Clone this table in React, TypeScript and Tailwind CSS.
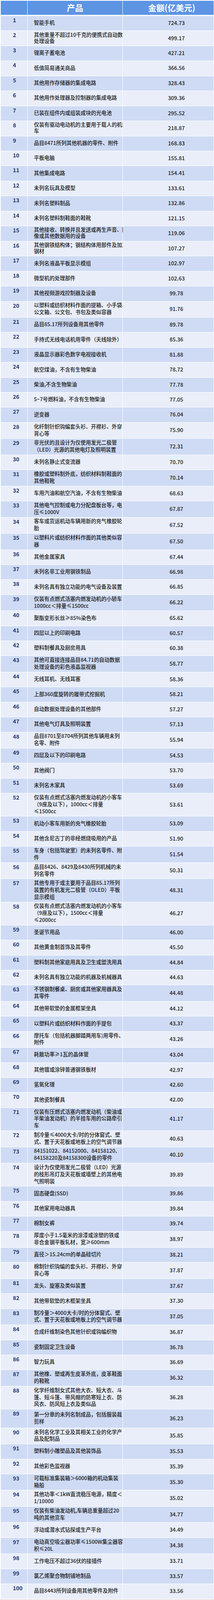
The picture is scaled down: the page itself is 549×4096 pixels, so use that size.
type Row = {
  no: number;
  lines: string[];
  amount: string;
  size?: 'tight' | 'tall';
};

const rows: Row[] = [
  { no: 1, lines: ['智能手机'], amount: '724.73' },
  { no: 2, lines: ['其他重量不超过10千克的便携式自动数据', '处理设备'], amount: '499.17', size: 'tight' },
  { no: 3, lines: ['锂离子蓄电池'], amount: '427.21' },
  { no: 4, lines: ['低值简易通关商品'], amount: '366.56' },
  { no: 5, lines: ['其他用作存储器的集成电路'], amount: '328.43' },
  { no: 6, lines: ['其他用作处理器及控制器的集成电路'], amount: '309.36' },
  { no: 7, lines: ['已装在组件内或组装成块的光电池'], amount: '295.52' },
  { no: 8, lines: ['仅装有驱动电动机的主要用于载人的机动', '车'], amount: '218.87', size: 'tight' },
  { no: 9, lines: ['品目8471所列其他机器的零件、附件'], amount: '168.83' },
  { no: 10, lines: ['平板电脑'], amount: '155.81' },
  { no: 11, lines: ['其他集成电路'], amount: '154.41' },
  { no: 12, lines: ['未列名玩具及模型'], amount: '133.61' },
  { no: 13, lines: ['未列名塑料制品'], amount: '132.86' },
  { no: 14, lines: ['未列名塑料制鞋面的鞋靴'], amount: '121.15' },
  { no: 15, lines: ['其他接收、转换并且发送或再生声音、图', '像或其他数据用的设备'], amount: '119.06', size: 'tight' },
  { no: 16, lines: ['其他钢铁结构体；钢结构体用部件及加工', '钢材'], amount: '107.27', size: 'tight' },
  { no: 17, lines: ['未列名液晶平板显示模组'], amount: '102.97' },
  { no: 18, lines: ['微型机的处理部件'], amount: '102.63' },
  { no: 19, lines: ['其他视频游戏控制器及设备'], amount: '99.78' },
  { no: 20, lines: ['以塑料或纺织材料作面的提箱、小手袋、', '公文箱、公文包、书包及类似容器'], amount: '91.76' },
  { no: 21, lines: ['品目85.17所列设备用其他零件'], amount: '89.78' },
  { no: 22, lines: ['手持式无线电话机用零件（天线除外）'], amount: '85.36' },
  { no: 23, lines: ['液晶显示器彩色数字电视接收机'], amount: '81.88' },
  { no: 24, lines: ['航空煤油，不含有生物柴油'], amount: '78.72' },
  { no: 25, lines: ['柴油,不含生物柴油'], amount: '77.78' },
  { no: 26, lines: ['5~7号燃料油，不含有生物柴油'], amount: '77.05' },
  { no: 27, lines: ['逆变器'], amount: '76.04' },
  { no: 28, lines: ['化纤制针织钩编套头衫、开襟衫、外穿', '背心等'], amount: '75.90' },
  { no: 29, lines: ['非光伏的且设计为仅使用发光二极管', '（LED）光源的其他电灯及照明装置'], amount: '72.31' },
  { no: 30, lines: ['未列名静止式变流器'], amount: '70.70' },
  { no: 31, lines: ['橡胶或塑料制外底，纺织材料制鞋面的', '其他鞋靴'], amount: '70.14' },
  { no: 32, lines: ['车用汽油和航空汽油，不含有生物柴油'], amount: '68.63' },
  { no: 33, lines: ['其他电气控制或电力分配盘板台等，电', '压≤1000V'], amount: '67.87' },
  { no: 34, lines: ['客车或货运机动车辆用新的充气橡胶轮', '胎'], amount: '67.52' },
  { no: 35, lines: ['以塑料片或纺织材料作面的其他类似容', '器'], amount: '67.50' },
  { no: 36, lines: ['其他金属家具'], amount: '67.44' },
  { no: 37, lines: ['未列名非工业用钢铁制品'], amount: '66.98' },
  { no: 38, lines: ['未列名具有独立功能的电气设备及装置'], amount: '66.85' },
  { no: 39, lines: ['仅装有点燃式活塞内燃发动机的小轿车，', '1000cc＜排量≤1500cc'], amount: '66.22' },
  { no: 40, lines: ['聚酯变形长丝≥85%染色布'], amount: '65.62' },
  { no: 41, lines: ['四层以上的印刷电路'], amount: '60.57' },
  { no: 42, lines: ['塑料制餐具及厨房用具'], amount: '60.38' },
  { no: 43, lines: ['其他可直接连接品目84.71的自动数据', '处理设备的彩色液晶监视器'], amount: '58.77' },
  { no: 44, lines: ['无线耳机、无线耳塞'], amount: '58.36' },
  { no: 45, lines: ['上部360度旋转的履带式挖掘机'], amount: '58.21' },
  { no: 46, lines: ['自动数据处理设备的其他部件'], amount: '57.27' },
  { no: 47, lines: ['其他电气灯具及照明装置'], amount: '57.13' },
  { no: 48, lines: ['品目8701至8704所列其他车辆用未列', '名零、附件'], amount: '55.94' },
  { no: 49, lines: ['四层及以下的印刷电路'], amount: '54.53' },
  { no: 50, lines: ['其他阀门'], amount: '53.70' },
  { no: 51, lines: ['未列名木家具'], amount: '53.69' },
  { no: 52, lines: ['仅装有点燃式活塞内燃发动机的小客车', '（9座及以下），1000cc＜排量', '≤1500cc'], amount: '53.61' },
  { no: 53, lines: ['机动小客车用新的充气橡胶轮胎'], amount: '53.09' },
  { no: 54, lines: ['其他含尼古丁的非经燃烧吸用的产品'], amount: '51.90' },
  { no: 55, lines: ['车身（包括驾驶室）的未列名零件、附', '件'], amount: '51.54' },
  { no: 56, lines: ['品目8426、8429及8430所列机械的未', '列名零件'], amount: '50.31' },
  { no: 57, lines: ['其他专用于或主要用于品目85.17所列', '装置的有机发光二极管（OLED）平板', '显示模组'], amount: '48.31' },
  { no: 58, lines: ['仅装有点燃式活塞内燃发动机的小客车', '（9座及以下），1500cc＜排量', '≤2000cc'], amount: '46.27' },
  { no: 59, lines: ['圣诞节用品'], amount: '46.00' },
  { no: 60, lines: ['其他黄金制首饰及其零件'], amount: '45.50' },
  { no: 61, lines: ['塑料制其他家庭用具及卫生或盥洗用具'], amount: '44.84' },
  { no: 62, lines: ['未列名具有独立功能的机器及机械器具'], amount: '44.63' },
  { no: 63, lines: ['不锈钢制餐桌、厨房或其他家用器具及', '其零件'], amount: '44.48' },
  { no: 64, lines: ['其他带软垫的金属框架坐具'], amount: '44.12' },
  { no: 65, lines: ['以塑料片或纺织材料作面的手提包'], amount: '43.37' },
  { no: 66, lines: ['摩托车（包括机器脚踏两用车)用零件、', '附件'], amount: '43.26' },
  { no: 67, lines: ['耗散功率≥1瓦的晶体管'], amount: '43.04' },
  { no: 68, lines: ['其他镀或涂锌普通钢铁板材'], amount: '42.97' },
  { no: 69, lines: ['氢氧化锂'], amount: '42.60' },
  { no: 70, lines: ['其他瓷制餐具'], amount: '42.00' },
  { no: 71, lines: ['仅装有压燃式活塞内燃发动机（柴油或', '半柴油发动机）的半挂车用的公路牵引', '车'], amount: '41.17' },
  { no: 72, lines: ['制冷量≤4000大卡/时的分体窗式、壁', '式、置于天花板或地板上的空气调节器'], amount: '40.63' },
  { no: 73, lines: ['84151022、84152000、84158120、', '84158220及84158300设备的零件'], amount: '40.10' },
  { no: 74, lines: ['设计为仅使用发光二极管（LED）光源', '的枝形吊灯及天花板或墙壁上的其他电', '气照明装'], amount: '39.89' },
  { no: 75, lines: ['固态硬盘(SSD)'], amount: '39.86' },
  { no: 76, lines: ['其他家用电动器具'], amount: '39.84' },
  { no: 77, lines: ['棉制女裤'], amount: '39.74' },
  { no: 78, lines: ['厚度小于1.5毫米的涂漆或涂塑的铁或', '非合金钢平板轧材，宽≥600mm'], amount: '38.97' },
  { no: 79, lines: ['直径＞15.24cm的单晶硅切片'], amount: '38.21' },
  { no: 80, lines: ['棉制针织钩编的套头衫、开襟衫、外穿', '背心等'], amount: '37.87' },
  { no: 81, lines: ['龙头、旋塞及类似装置'], amount: '37.67' },
  { no: 82, lines: ['其他带软垫的木框架坐具'], amount: '37.30' },
  { no: 83, lines: ['制冷量＞4000大卡/时的分体窗式、壁', '式、置于天花板或地板上的空气调节器'], amount: '37.05' },
  { no: 84, lines: ['合成纤维制染色其他针织或钩编织物'], amount: '36.87' },
  { no: 85, lines: ['瓷制固定卫生设备'], amount: '36.78' },
  { no: 86, lines: ['智力玩具'], amount: '36.69' },
  { no: 87, lines: ['其他橡、塑或再生皮革外底，皮革鞋面', '的鞋靴'], amount: '36.32' },
  { no: 88, lines: ['化学纤维制女式其他大衣、短大衣、斗', '篷、短斗篷、带风帽的防寒短上衣、防', '风衣、防风短上衣及类似品'], amount: '36.28' },
  { no: 89, lines: ['第一分章的未列名制成品，包括服装裁', '剪样'], amount: '36.23', size: 'tall' },
  { no: 90, lines: ['未列名化学工业及其相关工业的化学产', '品及配制品'], amount: '35.85' },
  { no: 91, lines: ['塑料制小雕塑品及其他装饰品'], amount: '35.53' },
  { no: 92, lines: ['其他彩色监视器'], amount: '35.39' },
  { no: 93, lines: ['可载标准集装箱＞6000箱的机动集装', '箱船'], amount: '35.30' },
  { no: 94, lines: ['其他功率＜1kW直流稳压电源，精度＜', '1/10000'], amount: '35.02' },
  { no: 95, lines: ['仅装有柴油发动机,车辆总重量超过20', '吨的其他货车'], amount: '34.77' },
  { no: 96, lines: ['浮动或潜水式钻探或生产平台'], amount: '34.49' },
  { no: 97, lines: ['电动真空吸尘器功率≤1500W集尘器容', '积≤20L'], amount: '34.38' },
  { no: 98, lines: ['工作电压不超过36伏的接插件'], amount: '33.71' },
  { no: 99, lines: ['氯乙烯聚合物制铺地制品'], amount: '33.57' },
  { no: 100, lines: ['品目8443所列设备用其他零件及附件'], amount: '33.56' },
];

// row box heights, measured from the reference and scaled
function rowHeight(row: Row) {
  if (row.size === 'tight') return 'h-[37.7px]';
  if (row.size === 'tall') return 'h-[46.5px]';
  if (row.lines.length === 3) return 'h-[58.3px]';
  if (row.lines.length === 2) return 'h-[40.5px]';
  return 'h-[37.4px]';
}

function TableRow({ row }: { row: Row }) {
  const bg = row.no % 2 === 1 ? 'bg-[#cfdbf4]' : 'bg-[#e9eef9]';
  const leading = row.size === 'tight' ? 'leading-[16px]' : 'leading-[17.9px]';

  return (
    <div className={`grid grid-cols-[68px_243px_1fr] gap-x-px ${rowHeight(row)}`}>
      <div className={`${bg} pl-[31px] text-[14px] font-bold leading-[20px] text-[#1f3c74]`}>{row.no}</div>
      <div className={`${bg} flex flex-col justify-center pb-[3px] pl-[16px] text-[13.3px] font-medium text-[#1a1a1a] ${leading}`}>
        {row.lines.map((line) => (
          <span key={line} className="whitespace-nowrap">
            {line}
          </span>
        ))}
      </div>
      <div className={`${bg} flex items-center justify-center pb-[3px] pl-[42px] text-[13.6px] font-medium text-[#1a1a1a]`}>
        {row.amount}
      </div>
    </div>
  );
}

export default function App() {
  return (
    <div className="flex min-h-[4096px] flex-col bg-white font-['Noto_Sans_CJK_SC','Noto_Sans',sans-serif]">
      <div className="pl-[2px] pr-[1px] pt-[1.6px]">
        <div className="grid h-[36.4px] grid-cols-[68px_243px_1fr] gap-x-px">
          <div className="bg-[#5d94e4]" />
          <div className="flex items-center justify-center bg-[#5d94e4] text-[21px] font-bold text-white">产品</div>
          <div className="flex items-center justify-center bg-[#5d94e4] pl-[18px] text-[21px] font-bold text-white">
            金额(亿美元)
          </div>
        </div>
        <div className="mt-[3px] flex flex-col gap-y-px">
          {rows.map((row) => (
            <TableRow key={row.no} row={row} />
          ))}
        </div>
      </div>
      <div className="flex-1" />
      <div className="h-[2px] bg-[#e6e6e6]" />
    </div>
  );
}
